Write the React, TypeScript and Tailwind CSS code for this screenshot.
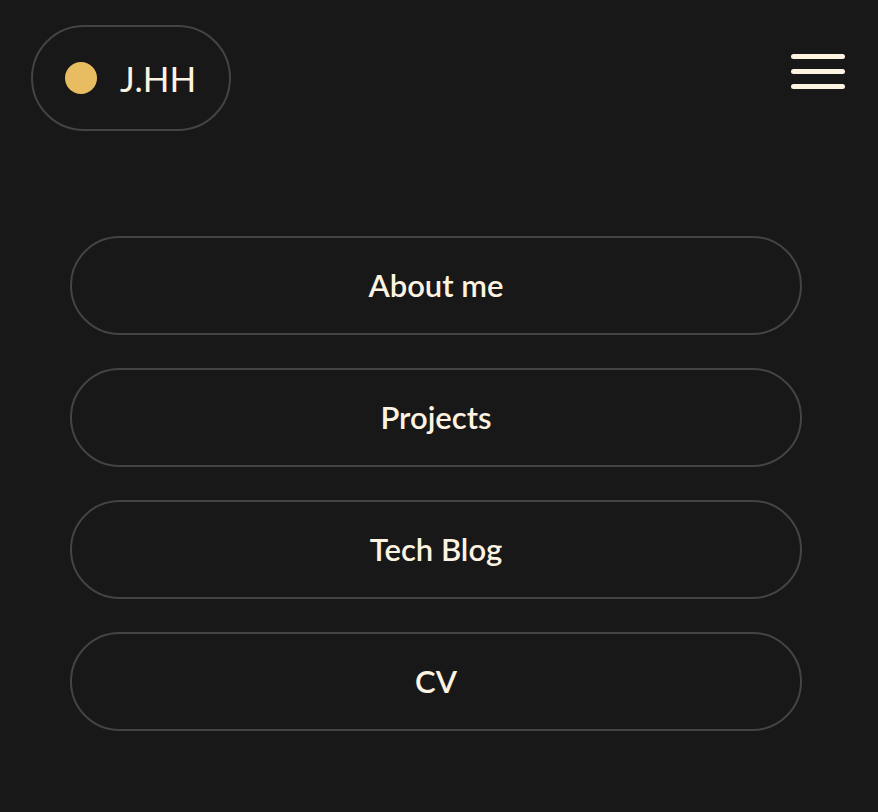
const links = ["About me", "Projects", "Tech Blog", "CV"];

export default function App() {
  return (
    <div
      className="min-h-[812px] w-full bg-[#181818] text-[#fdf3e1]"
      style={{ fontFamily: "Lato, 'Open Sans', sans-serif" }}
    >
      {/* header */}
      <header className="flex items-start justify-between pl-[31px] pr-[33px] pt-[25px]">
        <a className="flex h-[106px] w-[200px] items-center gap-[23px] rounded-full border-2 border-[#444] pl-[32px]">
          <span className="h-[32px] w-[32px] rounded-full bg-[#e8bd62]" />
          <span className="text-[35px] leading-none">J.HH</span>
        </a>
        <button type="button" className="mt-[29px] flex w-[54px] flex-col gap-[10px]">
          <span className="h-[5px] w-full rounded-full bg-[#fdf3e1]" />
          <span className="h-[5px] w-full rounded-full bg-[#fdf3e1]" />
          <span className="h-[5px] w-full rounded-full bg-[#fdf3e1]" />
        </button>
      </header>

      {/* nav */}
      <nav className="mt-[105px] flex flex-col gap-[33px] pl-[70px] pr-[76px]">
        {links.map((l) => (
          <a
            key={l}
            className="flex h-[99px] items-center justify-center rounded-full border-2 border-[#444] text-[31px] font-semibold"
          >
            {l}
          </a>
        ))}
      </nav>
    </div>
  );
}
